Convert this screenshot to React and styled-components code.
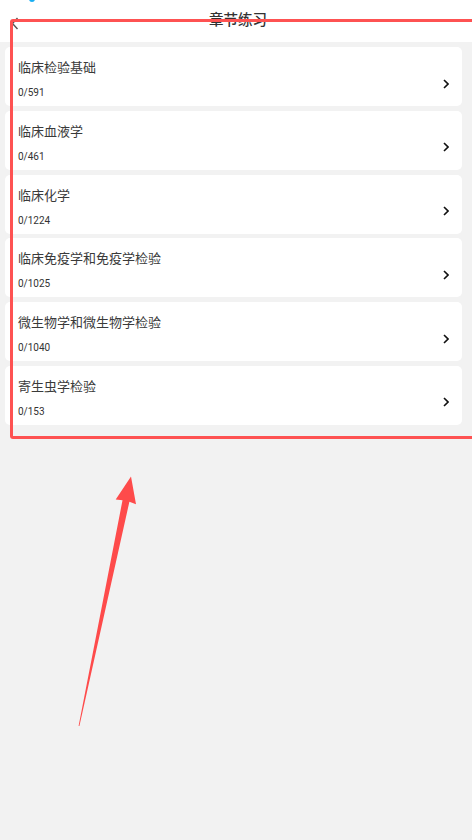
import React from "react";
import styled, { createGlobalStyle } from "styled-components";

const Global = createGlobalStyle`
  html, body { margin: 0; padding: 0; background: #f2f2f2; }
  body { font-family: Roboto, "Noto Sans CJK SC", sans-serif; }
  * { box-sizing: border-box; }
`;

const Page = styled.div`
  position: relative;
  width: 472px;
  min-height: 840px;
  background: #f2f2f2;
  overflow: hidden;
`;

const Header = styled.header`
  position: relative;
  height: 42px;
  background: #fff;
  display: flex;
  align-items: center;
  justify-content: center;
`;

const StatusDot = styled.span`
  position: absolute;
  left: 29px;
  top: -4px;
  width: 6px;
  height: 6px;
  border-radius: 50%;
  background: #18aef2;
`;

const Back = styled.button`
  position: absolute;
  left: 9px;
  top: 15px;
  width: 12px;
  height: 16px;
  padding: 0;
  border: 0;
  background: none;
  display: flex;
  align-items: center;
  justify-content: center;
`;

const Title = styled.h1`
  margin: 0 0 0 4px;
  font-size: 14.5px;
  font-weight: 500;
  color: #333;
  line-height: 20px;
`;

const List = styled.ul`
  list-style: none;
  margin: 0;
  padding: 5px 10px 0 5px;
  display: flex;
  flex-direction: column;
  gap: 4.8px;
`;

const Card = styled.li`
  height: 59px;
  background: #fff;
  border-radius: 5px;
  display: flex;
  align-items: center;
  padding: 0 12px 0 13px;
`;

const Info = styled.div`
  flex: 1;
  display: flex;
  flex-direction: column;
  align-self: stretch;
  justify-content: flex-start;
  padding-top: 12px;
`;

const Name = styled.div`
  font-size: 13px;
  line-height: 18px;
  color: #3a3a3a;
`;

const Count = styled.div`
  margin-top: 9px;
  font-size: 10px;
  line-height: 14px;
  color: #333;
`;

const Chevron = styled.span`
  margin-top: 14px;
  width: 8px;
  height: 10px;
  display: flex;
  align-items: center;
  justify-content: center;
`;

const Frame = styled.div`
  position: absolute;
  left: 10px;
  top: 19px;
  width: 470px;
  height: 420px;
  border: 3.5px solid #fe5252;
  border-radius: 3px;
  pointer-events: none;
`;

const Arrow = styled.svg`
  position: absolute;
  left: 0;
  top: 0;
  pointer-events: none;
`;

const items = [
  ["临床检验基础", "0/591"],
  ["临床血液学", "0/461"],
  ["临床化学", "0/1224"],
  ["临床免疫学和免疫学检验", "0/1025"],
  ["微生物学和微生物学检验", "0/1040"],
  ["寄生虫学检验", "0/153"],
];

export default function App() {
  return (
    <Page>
      <Global />
      <Header>
        <StatusDot />
        <Back aria-label="返回">
          <svg width="8" height="13" viewBox="0 0 8 13">
            <path d="M6.5 1 L1.5 6.5 L6.5 12" fill="none" stroke="#555" strokeWidth="1.4" />
          </svg>
        </Back>
        <Title>章节练习</Title>
      </Header>
      <List>
        {items.map(([name, count]) => (
          <Card key={name}>
            <Info>
              <Name>{name}</Name>
              <Count>{count}</Count>
            </Info>
            <Chevron>
              <svg width="6" height="10" viewBox="0 0 6 10">
                <path d="M1 1 L5 5 L1 9" fill="none" stroke="#111" strokeWidth="1.6" />
              </svg>
            </Chevron>
          </Card>
        ))}
      </List>
      <Frame />
      <Arrow width="472" height="840" viewBox="0 0 472 840">
        <polygon
          points="78.6,726 122.5,500.3 115.7,499.5 131,476.6 136,504.2 129.4,501.7 79.4,726"
          fill="#fe4b4b"
        />
      </Arrow>
    </Page>
  );
}
